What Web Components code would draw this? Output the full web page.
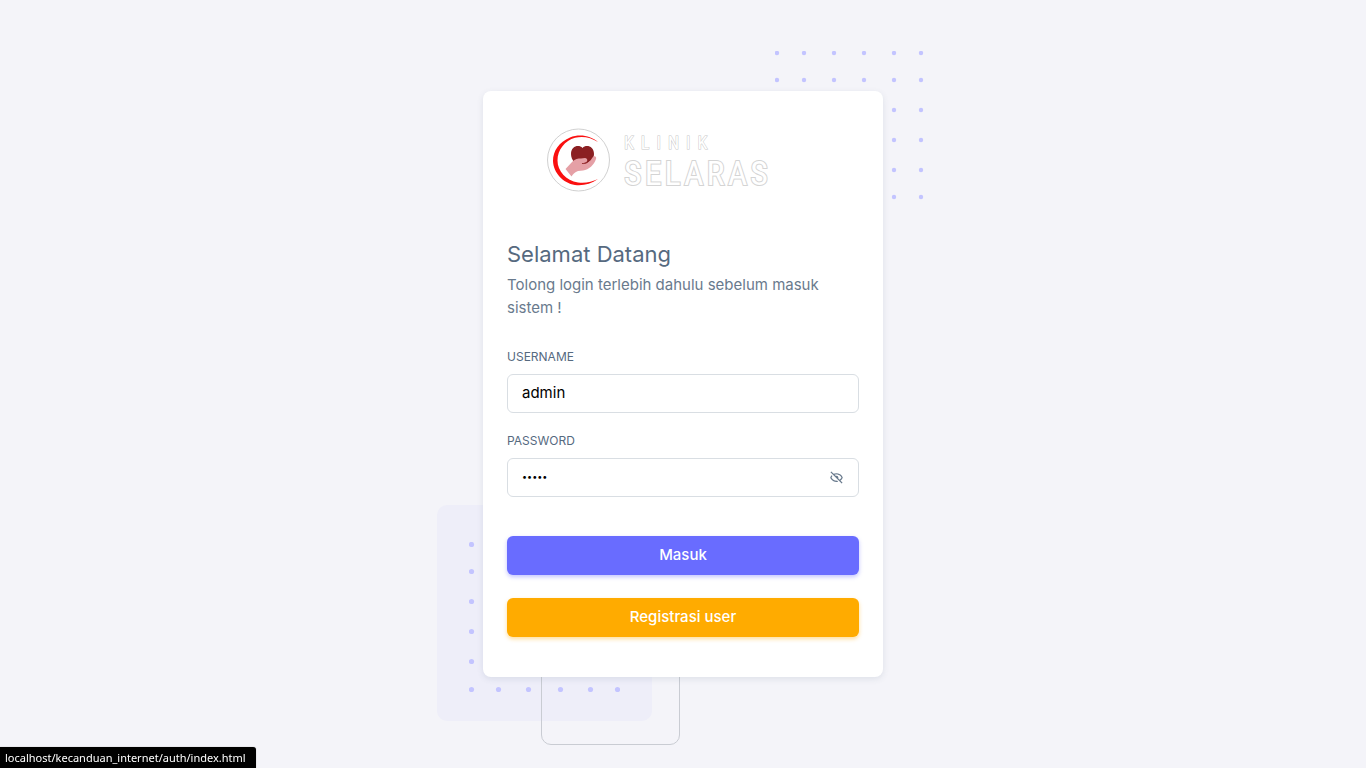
<!DOCTYPE html>
<html lang="id">
<head>
<meta charset="utf-8">
<meta name="viewport" content="width=device-width, initial-scale=1">
<title>Klinik Selaras - Login</title>
<style>
  html, body { margin: 0; }
  body {
    background: #f4f4f9;
    color: #697a8d;
    font: 15px/23px Inter, "Liberation Sans", sans-serif;
  }
</style>
</head>
<body>
<login-page></login-page>
<status-bubble>localhost/kecanduan_internet/auth/index.html</status-bubble>

<script>
class BaseElement extends HTMLElement {
  constructor() {
    super();
    this.attachShadow({ mode: "open" }).innerHTML = this.render();
  }
}

customElements.define("dot-pattern", class extends BaseElement {
  render() {
    const wide = this.hasAttribute("wide");
    const columns = wide ? [2, 29, 59, 91, 121, 148] : [2, 29, 59, 89, 119, 146];
    const rows = wide ? [2, 29, 59, 89, 119, 147] : [2, 29, 59, 89, 119, 146];
    const shift = wide ? 0.5 : 0;
    const dots = rows.map(y => columns.map(x => `<circle cx="${x + shift}" cy="${y + shift}" r="${wide ? 2.6 : 2.2}"/>`).join("")).join("");
    return `
      <style>
        :host { display: block; }
        svg { display: block; fill: #c3c4ff; }
      </style>
      <svg width="151" height="150" viewBox="0 0 151 150" aria-hidden="true">${dots}</svg>`;
  }
});

customElements.define("brand-logo", class extends BaseElement {
  render() {
    return `
      <style>
        :host { display: flex; align-items: flex-start; gap: 13px; height: 64px; }
        svg { display: block; flex: none; }
        .words { display: flex; flex-direction: column; padding-top: 4px; color: #fff; white-space: nowrap;
                 font-family: "Liberation Sans Narrow", "Roboto Condensed", Roboto, sans-serif; paint-order: stroke fill; }
        .small { font-size: 18px; line-height: 21px; letter-spacing: 7px; -webkit-text-stroke: 1px #c8c8c8; }
        .large { font-size: 34px; line-height: 40px; letter-spacing: 3px; -webkit-text-stroke: 2px #d4d4d4; }
      </style>
      <svg width="64" height="64" viewBox="0 0 64 64" aria-hidden="true">
        <circle cx="31.500" cy="32" r="31" fill="#fff" stroke="#c4c4c4" stroke-width=".8"/>
        <path d="M51 14C44 8 33 5.500 23 9.500C12 14 6 23 6 33C6.500 45 16 55 28 57C36 58 44 56 51 51C45 54 38 55.500 31 54.500C19 52.500 10.500 43 10.500 32.500C10.500 22 18 12.500 28 9.800C36 7.800 44 9.500 51 14Z" fill="#fa1010"/>
        <path d="M37 41C29 38 24 32 24 26C24 18 32 16 35.500 20C39 16 47 18 47 26C47 32 42 38 37 41Z" fill="#8b1f22"/>
        <path d="M18.500 41L25.500 33.500C28 31 31 30.500 34 30.500L38 30C41 30.500 41 33.500 38.500 34.500L34.500 35.500C39 36 43 34 45.500 29.500C47 27 50 28.500 49 31C47 37 42 41.500 36 42.500L31 43C28 44 26 46 24.500 48.500Z" fill="#e5a0a6"/>
        <path d="M35 35.500C39 36 42.500 34 43 30.500" fill="none" stroke="#8b1f22" stroke-width=".8"/>
      </svg>
      <div class="words"><span class="small">KLINIK</span><span class="large">SELARAS</span></div>`;
  }
});

customElements.define("text-field", class extends BaseElement {
  render() {
    const type = this.getAttribute("type") || "text";
    return `
      <style>
        :host { display: block; }
        label { display: block; margin-bottom: 9px; font-size: 12px; line-height: 17px; color: #566a7f; text-transform: uppercase; }
        .box { display: flex; align-items: center; box-sizing: border-box; height: 39px; border: 1px solid #d9dee3; border-radius: 6px; background: #fff; }
        .box:focus-within { border-color: #696cff; }
        input { flex: 1; min-width: 0; height: 37px; box-sizing: border-box; padding: 0 14px 2px; border: 0; outline: 0; background: none; color: #000; font: inherit; }
        input[type=password] { font-size: 9px; }
        ::slotted(*) { margin-right: 14px; }
      </style>
      <label for="field">${this.getAttribute("label")}</label>
      <div class="box"><input id="field" type="${type}" value="${this.getAttribute("value") || ""}"><slot></slot></div>`;
  }
  toggle() {
    const input = this.shadowRoot.querySelector("input");
    input.type = input.type === "password" ? "text" : "password";
  }
});

customElements.define("reveal-button", class extends BaseElement {
  constructor() {
    super();
    this.addEventListener("click", () => this.closest("text-field")?.toggle());
  }
  render() {
    return `
      <style>
        :host { display: block; }
        button { display: block; padding: 0; border: 0; background: none; color: #697a8d; cursor: pointer; }
        svg { display: block; fill: currentColor; }
      </style>
      <button type="button" aria-label="Tampilkan password">
        <svg width="15" height="15" viewBox="0 0 24 24" aria-hidden="true"><path d="M12 19c.946 0 1.810-.103 2.598-.281l-1.757-1.757c-.273.021-.550.038-.841.038-5.351 0-7.424-3.846-7.926-5a8.642 8.642 0 0 1 1.508-2.297L4.184 8.305c-1.538 1.667-2.121 3.346-2.132 3.379a.994.994 0 0 0 0 .633C2.073 12.383 4.367 19 12 19zm0-14c-1.837 0-3.346.396-4.604.981L3.707 2.293 2.293 3.707l18 18 1.414-1.414-3.319-3.319c2.614-1.951 3.547-4.615 3.561-4.657a.994.994 0 0 0 0-.633C21.927 11.617 19.633 5 12 5zm4.972 10.558-2.280-2.280c.190-.390.308-.819.308-1.278 0-1.641-1.359-3-3-3-.459 0-.888.118-1.277.309L8.915 7.501A9.260 9.260 0 0 1 12 7c5.351 0 7.424 3.846 7.926 5-.302.692-1.166 2.342-2.954 3.558z"/></svg>
      </button>`;
  }
});

customElements.define("action-button", class extends BaseElement {
  render() {
    return `
      <style>
        :host { display: block; --fill: #696cff; --glow: rgba(105, 108, 255, .4); }
        :host([tone=warning]) { --fill: #ffab00; --glow: rgba(255, 171, 0, .4); }
        button { display: block; width: 100%; height: 39px; padding: 0 20px 2px; border: 0; border-radius: 6px; background: var(--fill); box-shadow: 0 2px 4px var(--glow);
                 color: #fff; font: inherit; font-weight: 500; cursor: pointer; }
      </style>
      <button type="button"><slot></slot></button>`;
  }
});

customElements.define("login-card", class extends BaseElement {
  render() {
    return `
      <style>
        :host { display: block; position: relative; width: 100%; max-width: 400px; }
        .shape { position: absolute; }
        .top { top: -40px; right: -43px; }
        .panel { left: -46px; bottom: -44px; box-sizing: border-box; width: 215px; height: 216px; padding: 37px 32px; border-radius: 10px; background: #eeeef9; }
        .outline { left: 58px; bottom: -68px; box-sizing: border-box; width: 139px; height: 140px; border: 1px solid #c9ccd3; border-radius: 10px; }
        section { position: relative; box-sizing: border-box; padding: 37px 24px 40px; border-radius: 8px; background: #fff; box-shadow: 0 2px 6px rgba(67, 89, 113, .12); }
        brand-logo { margin: 0 40px 47px; }
        h1 { margin: 0 0 4px; color: #566a7f; font-size: 22px; line-height: 30px; font-weight: 400; }
        p { margin: 0 0 29px; }
        form { display: flex; flex-direction: column; }
        text-field + text-field { margin-top: 19px; }
        .actions { display: grid; gap: 23px; margin-top: 39px; }
      </style>
      <dot-pattern class="shape top"></dot-pattern>
      <div class="shape panel"><dot-pattern wide></dot-pattern></div>
      <div class="shape outline"></div>
      <section>
        <brand-logo></brand-logo>
        <h1>Selamat Datang</h1>
        <p>Tolong login terlebih dahulu sebelum masuk sistem !</p>
        <form>
          <text-field label="Username" value="admin"></text-field>
          <text-field label="Password" type="password" value="admin"><reveal-button></reveal-button></text-field>
          <div class="actions">
            <action-button>Masuk</action-button>
            <action-button tone="warning">Registrasi user</action-button>
          </div>
        </form>
      </section>`;
  }
});

customElements.define("login-page", class extends BaseElement {
  render() {
    return `
      <style>
        :host { display: flex; align-items: center; justify-content: center; box-sizing: border-box; min-height: 100vh; }
      </style>
      <login-card></login-card>`;
  }
});

customElements.define("status-bubble", class extends BaseElement {
  render() {
    return `
      <style>
        :host { display: block; position: fixed; left: 0; bottom: 0; padding: 2px 10px 2px 5px; border-radius: 0 3px 0 0; background: #000; color: #fff;
                box-shadow: 0 0 1px #888; font: 11px/17px "Noto Sans", "Open Sans", sans-serif; }
      </style>
      <slot></slot>`;
  }
});
</script>
</body>
</html>
